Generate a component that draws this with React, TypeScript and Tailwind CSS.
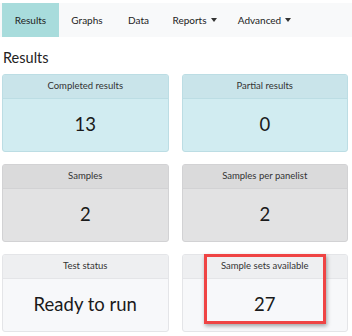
import React from "react";

const Caret = () => (
  <span className="ml-[4px] inline-block h-0 w-0 border-x-[3px] border-t-[4px] border-x-transparent border-t-[#333] align-middle" />
);

type CardProps = {
  title: string;
  value: string;
  head: string;
  body: string;
  border: string;
};

const Card = ({ title, value, head, body, border }: CardProps) => (
  <div className={`flex h-[78px] flex-col overflow-hidden rounded-[3px] border ${border} ${body}`}>
    <div className={`flex h-[24px] items-center justify-center border-b ${border} ${head} text-[9.5px] text-[#333]`}>
      {title}
    </div>
    <div className="flex flex-1 items-center justify-center pb-[1px] text-[18.5px] text-[#1a1a1a]">{value}</div>
  </div>
);

export default function App() {
  return (
    <div
      className="h-[336px] w-[352px] bg-white"
      style={{ fontFamily: "Lato, 'Open Sans', sans-serif" }}
    >
      <div className="pt-[3px]">
        <nav className="flex h-[34px] items-stretch bg-[#f8f9fa] pl-[2px] text-[10px] text-[#222]">
          <div className="flex w-[57px] items-center justify-center bg-[#a8dcdc]">Results</div>
          <div className="flex w-[56px] items-center justify-center">Graphs</div>
          <div className="flex w-[47px] items-center justify-center">Data</div>
          <div className="flex w-[65px] items-center justify-center">
            Reports
            <Caret />
          </div>
          <div className="flex w-[75px] items-center justify-center">
            Advanced
            <Caret />
          </div>
        </nav>
      </div>
      <h1 className="mt-[11px] pl-[3px] text-[14.5px] leading-[20px] text-[#222]">Results</h1>
      <div className="mt-[6px] grid grid-cols-2 gap-x-[13px] gap-y-[12px] pl-[2px] pr-[4px]">
        <Card title="Completed results" value="13" head="bg-[#c9e4ea]" body="bg-[#d1ecf1]" border="border-[#bcdde4]" />
        <Card title="Partial results" value="0" head="bg-[#c9e4ea]" body="bg-[#d1ecf1]" border="border-[#bcdde4]" />
        <Card title="Samples" value="2" head="bg-[#dadadb]" body="bg-[#e2e2e3]" border="border-[#d2d2d4]" />
        <Card title="Samples per panelist" value="2" head="bg-[#dadadb]" body="bg-[#e2e2e3]" border="border-[#d2d2d4]" />
        <Card title="Test status" value="Ready to run" head="bg-[#eeeff1]" body="bg-[#f7f8fa]" border="border-[#e4e5e8]" />
        <div className="relative">
          <Card title="Sample sets available" value="27" head="bg-[#eeeff1]" body="bg-[#f7f8fa]" border="border-[#e4e5e8]" />
          <div className="pointer-events-none absolute left-[22px] top-0 h-[70px] w-[122px] border-[3px] border-[#ef4444] shadow-[1px_2px_4px_rgba(0,0,0,0.35)]" />
        </div>
      </div>
    </div>
  );
}
